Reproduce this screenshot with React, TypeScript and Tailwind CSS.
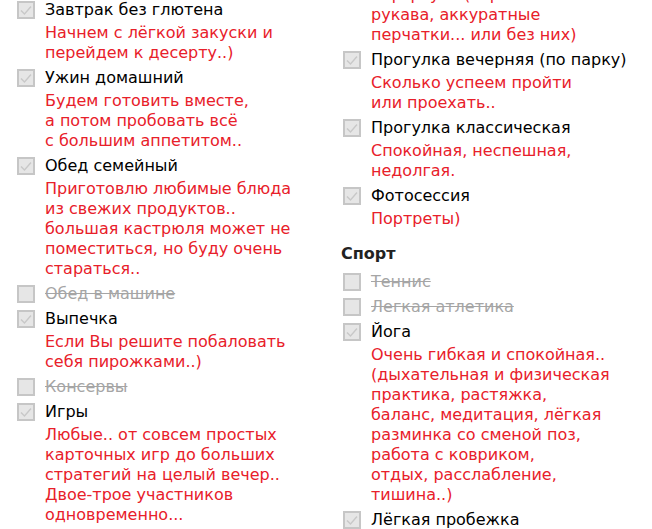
type Item = {
  title: string;
  disabled?: boolean;
  desc?: string[];
};

const leftItems: Item[] = [
  { title: "Завтрак без глютена", desc: ["Начнем с лёгкой закуски и", "перейдем к десерту..)"] },
  { title: "Ужин домашний", desc: ["Будем готовить вместе,", "а потом пробовать всё", "с большим аппетитом.."] },
  {
    title: "Обед семейный",
    desc: [
      "Приготовлю любимые блюда",
      "из свежих продуктов..",
      "большая кастрюля может не",
      "поместиться, но буду очень",
      "стараться..",
    ],
  },
  { title: "Обед в машине", disabled: true },
  { title: "Выпечка", desc: ["Если Вы решите побаловать", "себя пирожками..)"] },
  { title: "Консервы", disabled: true },
  {
    title: "Игры",
    desc: [
      "Любые.. от совсем простых",
      "карточных игр до больших",
      "стратегий на целый вечер..",
      "Двое-трое участников",
      "одновременно...",
    ],
  },
];

const rightTop: Item[] = [
  { title: "", desc: ["В фартуке (короткие", "рукава, аккуратные", "перчатки... или без них)"] },
  { title: "Прогулка вечерняя (по парку)", desc: ["Сколько успеем пройти", "или проехать.."] },
  { title: "Прогулка классическая", desc: ["Спокойная, неспешная,", "недолгая."] },
  { title: "Фотосессия", desc: ["Портреты)"] },
];

const rightBottom: Item[] = [
  { title: "Теннис", disabled: true },
  { title: "Легкая атлетика", disabled: true },
  {
    title: "Йога",
    desc: [
      "Очень гибкая и спокойная..",
      "(дыхательная и физическая",
      "практика, растяжка,",
      "баланс, медитация, лёгкая",
      "разминка со сменой поз,",
      "работа с ковриком,",
      "отдых, расслабление,",
      "тишина..)",
    ],
  },
  { title: "Лёгкая пробежка" },
];

function Box({ checked }: { checked: boolean }) {
  return (
    <span className="flex h-[18px] w-[18px] shrink-0 items-center justify-center border-2 border-[#c6c6c6] bg-[#e6e6e6]">
      {checked && (
        <svg width="14" height="14" viewBox="0 0 14 14" fill="none">
          <path d="M2 7.5 L5.5 11 L12 3.5" stroke="#c8c8c8" strokeWidth="1.4" />
        </svg>
      )}
    </span>
  );
}

function Row({ item }: { item: Item }) {
  return (
    <div className="mb-[5px]">
      {item.title && (
        <div className="flex h-5 items-center gap-[10px]">
          <Box checked={!item.disabled} />
          <span className={item.disabled ? "text-[#a5a5a5] line-through" : "text-black"}>{item.title}</span>
        </div>
      )}
      {item.desc && (
        <div className={item.title ? "mt-[3px] pl-[28px] text-[#e8202a]" : "pl-[28px] text-[#e8202a]"}>
          {item.desc.map((l, i) => (
            <div key={i}>{l}</div>
          ))}
        </div>
      )}
    </div>
  );
}

export default function App() {
  return (
    <div
      className="flex h-[529px] w-[652px] overflow-hidden bg-white text-[16px] leading-5"
      style={{ fontFamily: '"DejaVu Sans", Verdana, sans-serif' }}
    >
      <div className="w-[326px] shrink-0 pl-[17px]">
        {leftItems.map((it, i) => (
          <Row key={i} item={it} />
        ))}
      </div>
      <div className="-mt-[15px] pl-[17px]">
        {rightTop.map((it, i) => (
          <Row key={i} item={it} />
        ))}
        <div className="mt-[15px] mb-[8px] -ml-[2px] font-bold text-[#222]">Спорт</div>
        {rightBottom.map((it, i) => (
          <Row key={i} item={it} />
        ))}
      </div>
    </div>
  );
}
